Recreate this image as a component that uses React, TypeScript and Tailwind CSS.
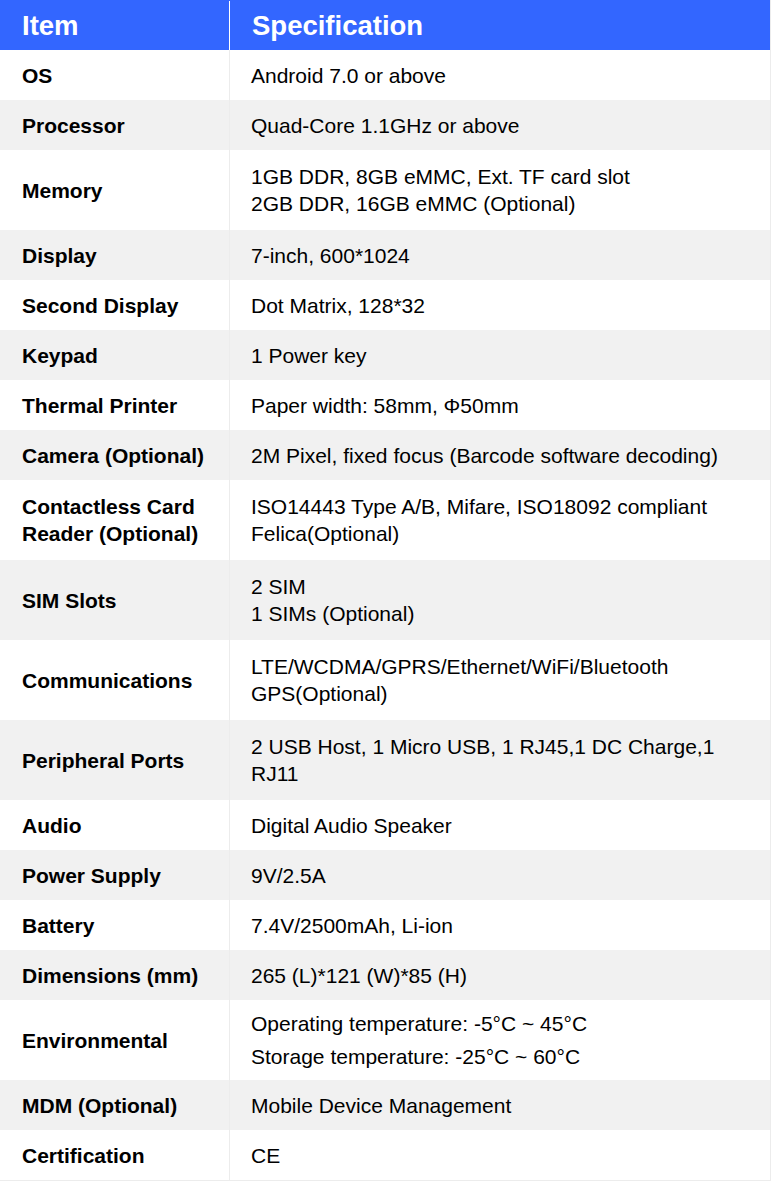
import React from "react";

type Row = { label: string[]; value: string[]; tall?: boolean; wide?: boolean };

const rows: Row[] = [
  { label: ["OS"], value: ["Android 7.0 or above"] },
  { label: ["Processor"], value: ["Quad-Core 1.1GHz or above"] },
  { label: ["Memory"], value: ["1GB DDR, 8GB eMMC, Ext. TF card slot", "2GB DDR, 16GB eMMC (Optional)"], tall: true },
  { label: ["Display"], value: ["7-inch, 600*1024"] },
  { label: ["Second Display"], value: ["Dot Matrix, 128*32"] },
  { label: ["Keypad"], value: ["1 Power key"] },
  { label: ["Thermal Printer"], value: ["Paper width: 58mm, Φ50mm"] },
  { label: ["Camera (Optional)"], value: ["2M Pixel, fixed focus (Barcode software decoding)"] },
  { label: ["Contactless Card", "Reader (Optional)"], value: ["ISO14443 Type A/B, Mifare, ISO18092 compliant", "Felica(Optional)"], tall: true },
  { label: ["SIM Slots"], value: ["2 SIM", "1 SIMs (Optional)"], tall: true },
  { label: ["Communications"], value: ["LTE/WCDMA/GPRS/Ethernet/WiFi/Bluetooth", "GPS(Optional)"], tall: true },
  { label: ["Peripheral Ports"], value: ["2 USB Host, 1 Micro USB, 1 RJ45,1 DC Charge,1", "RJ11"], tall: true },
  { label: ["Audio"], value: ["Digital Audio Speaker"] },
  { label: ["Power Supply"], value: ["9V/2.5A"] },
  { label: ["Battery"], value: ["7.4V/2500mAh, Li-ion"] },
  { label: ["Dimensions (mm)"], value: ["265 (L)*121 (W)*85 (H)"] },
  { label: ["Environmental"], value: ["Operating temperature: -5°C ~ 45°C", "Storage temperature: -25°C ~ 60°C"], tall: true, wide: true },
  { label: ["MDM (Optional)"], value: ["Mobile Device Management"] },
  { label: ["Certification"], value: ["CE"] },
];

export default function App() {
  return (
    <div
      className="w-[771px] bg-white text-black border-r border-b border-[#ececec]"
      style={{ fontFamily: '"Liberation Sans", Arial, sans-serif' }}
    >
      <div className="flex h-[50px] bg-[#3366ff] text-white font-bold text-[27.5px] pt-[1px]">
        <div className="w-[230px] shrink-0 border-r border-white flex items-center pl-[22px]">Item</div>
        <div className="flex-1 flex items-center pl-[22px]">Specification</div>
      </div>
      {rows.map((r, i) => (
        <div
          key={i}
          className={
            "flex text-[21px] " +
            (r.tall ? "h-[80px] " : "h-[50px] ") +
            (i % 2 === 1 ? "bg-[#f1f1f1]" : "bg-white")
          }
        >
          <div className="w-[230px] shrink-0 border-r border-[#ececec] flex flex-col justify-center pl-[22px] font-bold leading-[27px]">
            {r.label.map((l, j) => (
              <div key={j}>{l}</div>
            ))}
          </div>
          <div
            className={
              "flex-1 flex flex-col justify-center pl-[21px] " +
              (r.wide ? "leading-[33px]" : "leading-[27px]")
            }
          >
            {r.value.map((v, j) => (
              <div key={j}>{v}</div>
            ))}
          </div>
        </div>
      ))}
    </div>
  );
}
